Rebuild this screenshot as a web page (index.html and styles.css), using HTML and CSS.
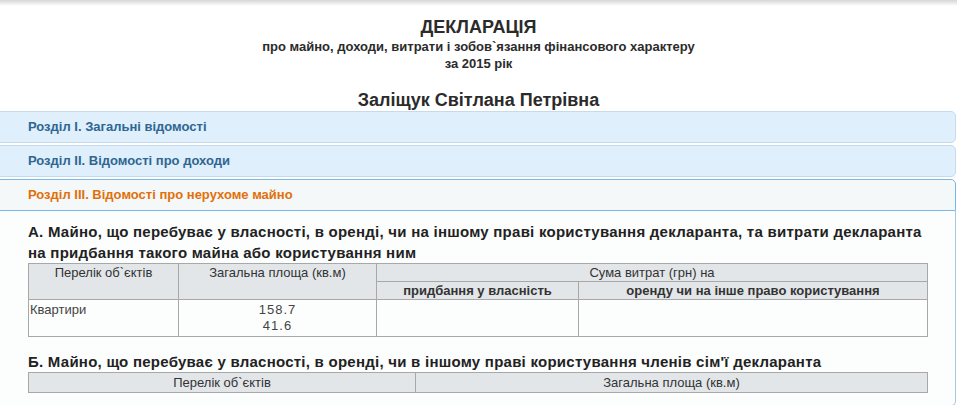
FILE: index.html
```html
<!DOCTYPE html>
<html lang="uk">
<head>
    <meta charset="UTF-8">
    <title>Декларація</title>
    <link rel="stylesheet" href="styles.css">
</head>
<body>
    <div class="top-shadow"></div>

    <div class="doc-title">
        <h1>ДЕКЛАРАЦІЯ</h1>
        <p class="subtitle">про майно, доходи, витрати і зобов`язання фінансового характеру</p>
        <p class="subtitle">за 2015 рік</p>
        <h2 class="person">Заліщук Світлана Петрівна</h2>
    </div>

    <div class="accordion">
        <div class="acc-header">Розділ I. Загальні відомості</div>
        <div class="acc-header">Розділ II. Відомості про доходи</div>
        <div class="acc-header active">Розділ III. Відомості про нерухоме майно</div>
        <div class="acc-content">
            <h3>А. Майно, що перебуває у власності, в оренді, чи на іншому праві користування декларанта, та витрати декларанта на придбання такого майна або користування ним</h3>
            <table class="decl-table">
                <colgroup>
                    <col style="width: 150px">
                    <col style="width: 198px">
                    <col style="width: 202px">
                    <col>
                </colgroup>
                <tr>
                    <th rowspan="2">Перелік об`єктів</th>
                    <th rowspan="2">Загальна площа (кв.м)</th>
                    <th colspan="2">Сума витрат (грн) на</th>
                </tr>
                <tr>
                    <th class="strong">придбання у власність</th>
                    <th class="strong">оренду чи на інше право користування</th>
                </tr>
                <tr>
                    <td>Квартири</td>
                    <td class="num">158.7<br>41.6</td>
                    <td></td>
                    <td></td>
                </tr>
            </table>

            <h3>Б. Майно, що перебуває у власності, в оренді, чи в іншому праві користування членів сім'ї декларанта</h3>
            <table class="decl-table single">
                <colgroup>
                    <col style="width: 387px">
                    <col>
                </colgroup>
                <tr>
                    <th>Перелік об`єктів</th>
                    <th>Загальна площа (кв.м)</th>
                </tr>
            </table>
        </div>
    </div>
</body>
</html>
```

FILE: styles.css
```css
body {
    margin: 0;
    font-family: "Liberation Sans", Arial, sans-serif;
    color: #222;
    background: #fff;
    overflow: hidden;
}
.top-shadow {
    height: 6px;
    background: linear-gradient(#d6d6d6, #fff);
}
.doc-title {
    text-align: center;
    color: #2b2b2b;
}
.doc-title h1 {
    margin: 10px 0 0;
    font-size: 18px;
    line-height: 22px;
}
.subtitle {
    margin: 0;
    font-size: 13px;
    font-weight: bold;
    line-height: 17px;
}
.person {
    margin: 17px 0 0;
    font-size: 18px;
    line-height: 22px;
}
.accordion {
    margin-left: -4px;
    width: 960px;
}
.acc-header {
    margin-top: 2px;
    padding: 7px 0 7px 31px;
    border: 1px solid #c5dbec;
    border-radius: 5px;
    background: #dfeffc;
    color: #2f6691;
    font-size: 13px;
    font-weight: bold;
    line-height: 16px;
}
.acc-header:first-child {
    margin-top: 0;
}
.acc-header.active {
    border-color: #79b7e7;
    border-radius: 5px 5px 0 0;
    background: #f5f8f9;
    color: #e17009;
}
.acc-content {
    padding: 10px 28px 12px 31px;
    border: 1px solid #a6c9e2;
    border-top: none;
    border-radius: 0 0 5px 5px;
    background: #fcfdfd;
}
.acc-content h3 {
    margin: 0 -8px 0 0;
    font-size: 15px;
    line-height: 21px;
    letter-spacing: 0.25px;
    color: #222;
}
.acc-content h3 + .decl-table + h3 {
    margin-top: 14px;
}
.decl-table {
    width: 900px;
    border-collapse: collapse;
    table-layout: fixed;
    font-size: 13px;
    color: #333;
}
.decl-table th {
    padding: 0 2px;
    border: 1px solid #a8a8a8;
    background: #e2e6e9;
    font-weight: normal;
    line-height: 17px;
    vertical-align: top;
}
.decl-table.single th {
    padding: 1px 2px;
}
.decl-table th.strong {
    font-weight: bold;
}
.decl-table td {
    padding: 2px 1px;
    border: 1px solid #a8a8a8;
    line-height: 16px;
    vertical-align: top;
    color: #444;
}
.decl-table td.num {
    text-align: center;
    letter-spacing: 1px;
}
```
